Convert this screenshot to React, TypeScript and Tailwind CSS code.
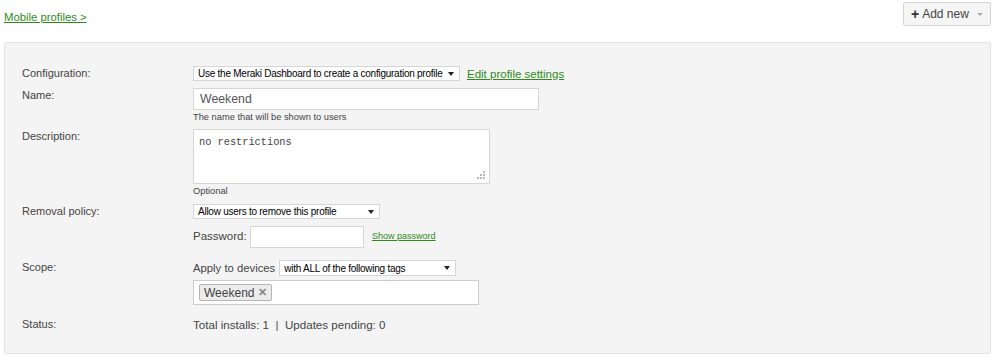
import { ReactNode } from "react";

const FONT = "font-['Liberation_Sans',Arial,sans-serif]";

const Caret = () => (
  <span className="ml-auto mr-[5px] inline-block h-0 w-0 border-x-[3.5px] border-t-[4px] border-x-transparent border-t-[#222]" />
);

const FakeSelect = ({ width, height = 15, text }: { width: number; height?: number; text: string }) => (
  <div
    className="flex items-center border border-[#d6d6d6] bg-white pl-[4px] text-[10px] tracking-[-0.25px] text-black"
    style={{ width, height }}
  >
    <span className="whitespace-nowrap">{text}</span>
    <Caret />
  </div>
);

const Row = ({ label, children, className = "" }: { label: string; children: ReactNode; className?: string }) => (
  <div className={`flex ${className}`}>
    <div className="w-[171px] shrink-0 text-[11px] leading-[15px] text-[#444]">{label}</div>
    <div className="flex flex-col">{children}</div>
  </div>
);

export default function App() {
  return (
    <div className={`${FONT} relative h-[362px] w-[1000px] bg-white`}>
      <div className="flex items-start justify-between pl-[4px] pr-[9px] pt-[2px]">
        <a href="#" className="mt-[8px] text-[11.3px] leading-[14px] text-[#2e8b1a] underline">
          Mobile profiles &gt;
        </a>
        <button className="flex h-[24px] w-[88px] items-center rounded-[2px] border border-[#d5d5d5] bg-[#f5f5f5] pl-[7px] text-[12px] text-[#444]">
          <span className="mr-[3px] text-[14px] font-bold leading-none text-[#333]">+</span>
          Add new
          <span className="ml-[8px] inline-block h-0 w-0 border-x-[3px] border-t-[3px] border-x-transparent border-t-[#aaa]" />
        </button>
      </div>

      <div className="mx-[4px] mt-[16px] h-[312px] w-[987px] rounded-[3px] border border-[#e3e3e3] bg-[#f4f4f4] pl-[17px] pt-[23px]">
        <Row label="Configuration:">
          <div className="flex items-center">
            <FakeSelect width={267} text="Use the Meraki Dashboard to create a configuration profile" />
            <a href="#" className="ml-[7px] text-[11.5px] leading-[14px] text-[#2e8b1a] underline">
              Edit profile settings
            </a>
          </div>
        </Row>

        <Row label="Name:" className="mt-[7px]">
          <div className="flex h-[22px] w-[346px] items-center border border-[#d6d6d6] bg-white pl-[6px] text-[12.3px] text-[#555]">
            Weekend
          </div>
          <div className="mt-[2px] text-[9.3px] leading-[10px] text-[#444]">The name that will be shown to users</div>
        </Row>

        <Row label="Description:" className="mt-[7px]">
          <div className="relative h-[55px] w-[297px] border border-[#d6d6d6] bg-white pl-[5px] pt-[5px] font-['Liberation_Mono',monospace] text-[10.3px] leading-[14px] text-[#444]">
            no restrictions
            <svg className="absolute bottom-[3px] right-[3px]" width="9" height="9" viewBox="0 0 9 9">
              <g fill="#bbb">
                <rect x="6" y="0" width="2" height="2" />
                <rect x="3" y="3" width="2" height="2" />
                <rect x="6" y="3" width="2" height="2" />
                <rect x="0" y="6" width="2" height="2" />
                <rect x="3" y="6" width="2" height="2" />
                <rect x="6" y="6" width="2" height="2" />
              </g>
            </svg>
          </div>
          <div className="mt-[2px] text-[9.3px] leading-[10px] text-[#444]">Optional</div>
        </Row>

        <Row label="Removal policy:" className="mt-[8px]">
          <FakeSelect width={187} text="Allow users to remove this profile" />
          <div className="mt-[7px] flex items-center">
            <span className="w-[57px] text-[11.5px] text-[#444]">Password:</span>
            <div className="h-[22px] w-[114px] border border-[#d6d6d6] bg-white" />
            <a href="#" className="ml-[8px] text-[9px] text-[#2e8b1a] underline">
              Show password
            </a>
          </div>
        </Row>

        <Row label="Scope:" className="mt-[12px]">
          <div className="flex items-center">
            <span className="mr-[4px] text-[11.3px] leading-[16px] text-[#444]">Apply to devices</span>
            <FakeSelect width={177} height={16} text="with ALL of the following tags" />
          </div>
          <div className="mt-[4px] flex h-[25px] w-[286px] items-center border border-[#ccc] bg-white pl-[5px]">
            <div className="flex h-[17px] items-center rounded-[2px] border border-[#b5b5b5] bg-[#ececec] pl-[4px] pr-[4px] text-[12px] text-[#444]">
              Weekend
              <span className="ml-[4px] text-[11px] font-bold text-[#888]">✕</span>
            </div>
          </div>
        </Row>

        <Row label="Status:" className="mt-[12px]">
          <div className="text-[11.6px] leading-[15px] text-[#444]">Total installs: 1&nbsp; |&nbsp; Updates pending: 0</div>
        </Row>
      </div>
    </div>
  );
}
